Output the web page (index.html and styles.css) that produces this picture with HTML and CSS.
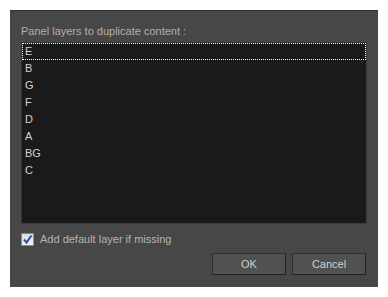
FILE: index.html
```html
<!DOCTYPE html>
<html>
<head>
<meta charset="utf-8">
<link rel="stylesheet" href="styles.css">
</head>
<body>
<div class="dialog">
  <div class="caption">Panel layers to duplicate content :</div>
  <div class="list">
    <div class="item focused">E</div>
    <div class="item">B</div>
    <div class="item">G</div>
    <div class="item">F</div>
    <div class="item">D</div>
    <div class="item">A</div>
    <div class="item">BG</div>
    <div class="item">C</div>
  </div>
  <label class="check-row">
    <span class="checkbox">
      <svg width="11" height="11" viewBox="0 0 11 11"><path d="M2 5.5 L4.5 8.5 L9.5 1.5" fill="none" stroke="#2c4fa8" stroke-width="2"/></svg>
    </span>
    <span class="check-label">Add default layer if missing</span>
  </label>
  <div class="buttons">
    <div class="btn">OK</div>
    <div class="btn">Cancel</div>
  </div>
</div>
</body>
</html>
```
FILE: styles.css
```css
html, body {
  margin: 0;
  padding: 0;
  background: #ffffff;
}
body {
  padding: 10px;
  font-family: "Liberation Sans", Arial, sans-serif;
  font-size: 11px;
}
.dialog {
  width: 368px;
  height: 277px;
  box-sizing: border-box;
  background: #474747;
  border-top: 1px solid #2f2b2e;
  padding: 13px 11px 12px 11px;
  display: flex;
  flex-direction: column;
}
.caption {
  line-height: 14px;
  height: 14px;
  color: #b0b0b0;
}
.list {
  margin-top: 4px;
  height: 182px;
  box-sizing: border-box;
  background: #1a1a1a;
  border: 1px solid #3b3b3b;
  border-top-color: #333;
  border-left-color: #333;
}
.item {
  height: 17px;
  line-height: 17px;
  padding-left: 3px;
  color: #d2d2d2;
}
.item.focused {
  outline: 1px dotted #ffffff;
  outline-offset: -1px;
}
.check-row {
  margin-top: 8px;
  display: flex;
  align-items: center;
  height: 14px;
}
.checkbox {
  width: 11px;
  height: 11px;
  border: 1px solid #8a8a8a;
  background: linear-gradient(#dcdce4, #f4f4f8);
  display: flex;
  align-items: center;
  justify-content: center;
  margin-left: 0px;
}
.check-label {
  margin-left: 6px;
  color: #b4b4b4;
  line-height: 14px;
}
.buttons {
  margin-top: 7px;
  display: flex;
  justify-content: flex-end;
  gap: 6px;
  padding-right: 1px;
}
.btn {
  width: 74px;
  height: 22px;
  box-sizing: border-box;
  background: #515151;
  border: 1px solid #303030;
  border-bottom-color: #1f1f1f;
  border-right-color: #222;
  color: #d0d0d0;
  text-align: center;
  line-height: 20px;
}
```
